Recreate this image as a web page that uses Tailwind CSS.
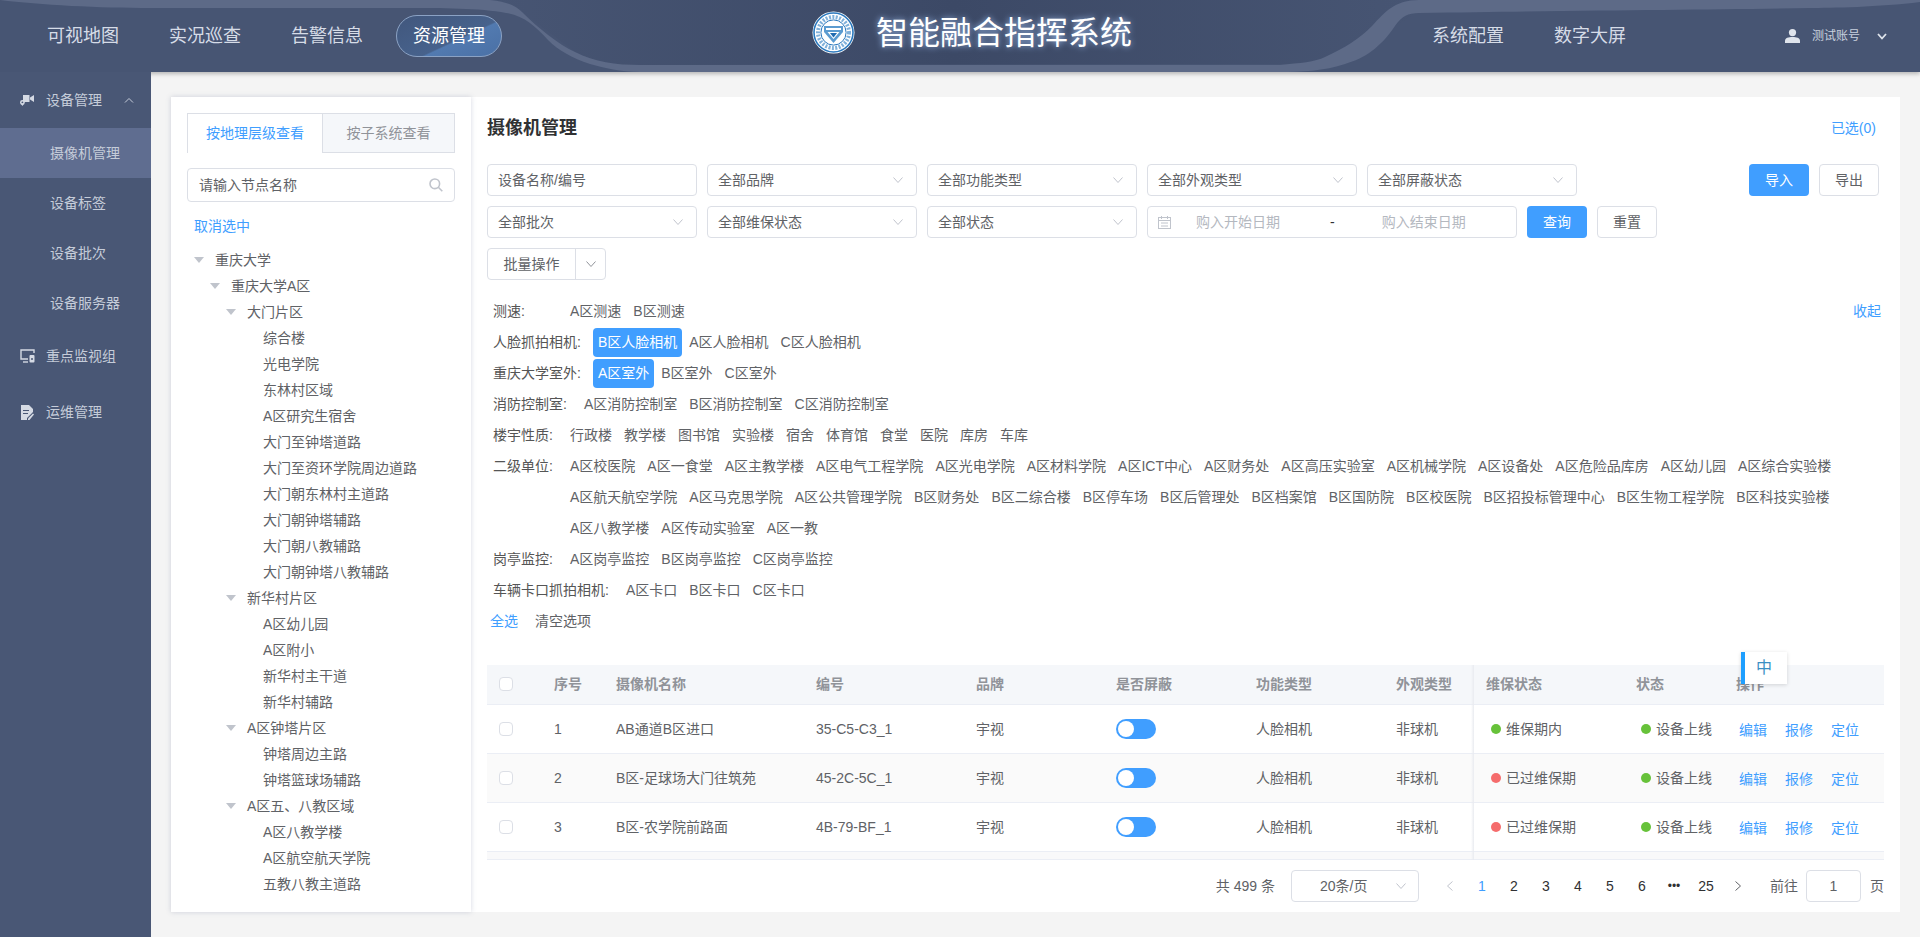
<!DOCTYPE html>
<html lang="zh-CN">
<head>
    <meta charset="UTF-8">
    <title>智能融合指挥系统</title>
    <script src="https://cdn.jsdelivr.net/npm/@tailwindcss/browser@4"></script>
</head>
<body class="h-[937px] overflow-hidden flex flex-col bg-[#f4f4f4] text-sm text-[#606266] [font-family:'Liberation_Sans','Noto_Sans_CJK_SC',sans-serif]">

    <!-- header -->
    <header class="relative z-10 h-[72px] shrink-0 flex items-center bg-[#475573] shadow-[0_2px_4px_rgba(0,0,0,.25)]">
        <svg class="absolute inset-0" width="1920" height="72" viewBox="0 0 1920 72">
            <defs>
                <linearGradient id="mid" x1="0" x2="1" y1="0" y2="0">
                    <stop offset="0" stop-color="#475573"/>
                    <stop offset="0.5" stop-color="#3c4966"/>
                    <stop offset="1" stop-color="#475573"/>
                </linearGradient>
            </defs>
            <path fill="url(#mid)" d="M490 0 H1419 V13 L1395 26 C1380 48 1365 58 1345 64 L1280 64 L640 65 C615 65 595 62 575 52 L522 12 Z"/>
            <path fill="#5d6a87" d="M0 0 H490 C508 2 516 6 522 12 C538 28 558 44 575 52 C595 62 615 65 640 65 H1280 C1300 63 1315 62 1325 57 C1345 48 1360 38 1372 26 C1385 12 1395 0 1419 0 H1920 V2 C1880 7 1830 8 1810 8 C1700 10 1600 10 1419 13 C1408 13 1402 16 1395 26 C1380 48 1365 58 1345 64 C1325 71 1300 72 1280 72 H640 C620 72 605 68 590 64 C572 58 558 50 548 40 C535 26 524 16 506 13 C480 8 440 8 408 8 H151 C100 8 40 5 0 0 Z"/>
        </svg>

        <nav class="relative flex items-center gap-[50px] pl-[47px] text-lg text-[#d6dce7]">
            <a>可视地图</a>
            <a>实况巡查</a>
            <a>告警信息</a>
            <a class="-ml-[17px] h-[42px] px-4 flex items-center rounded-[21px] border border-[#8ba2c4] text-white bg-[linear-gradient(155deg,#41577d_0%,#47628c_58%,#527ab0_60%,#4a70a5_100%)]">资源管理</a>
        </nav>

        <div class="absolute left-[812px] top-[11px] flex items-center">
            <svg width="43" height="43" viewBox="0 0 43 43">
                <circle cx="21.5" cy="21.5" r="21" fill="#fff"/>
                <circle cx="21.5" cy="21.5" r="19.5" fill="none" stroke="#2a78bd" stroke-width="1.6"/>
                <circle cx="21.5" cy="21.5" r="15.5" fill="none" stroke="#7fb0da" stroke-width="4" stroke-dasharray="2 1.4"/>
                <circle cx="21.5" cy="21.5" r="12.6" fill="#fff" stroke="#2a78bd" stroke-width="1"/>
                <path fill="#5b9bd0" d="M12 15 H31 V21 L21.5 32 L12 21 Z"/>
                <path fill="#fff" d="M14 17 H29 V19 H14 Z M15.5 21 H27.5 L21.5 28 Z"/>
                <path fill="#1f6bb0" d="M18 22 H25 L21.5 26.5 Z"/>
            </svg>
            <h1 class="ml-[21px] text-[32px] leading-[42px] text-white [text-shadow:0_0_6px_rgba(170,205,255,.85)]">智能融合指挥系统</h1>
        </div>

        <nav class="relative ml-auto flex items-center gap-[50px] text-lg text-[#d6dce7]">
            <a>系统配置</a>
            <a>数字大屏</a>
        </nav>
        <div class="relative ml-[159px] mr-[33px] flex items-center text-xs text-[#c9d1df]">
            <svg width="15" height="14" viewBox="0 0 15 14" fill="#dfe4ec"><circle cx="7.5" cy="3.6" r="3.6"/><path d="M0 14 V11.5 C0 9 3.5 8 7.5 8 S15 9 15 11.5 V14 Z"/></svg>
            <span class="ml-3 w-12">测试账号</span>
            <svg class="ml-[17px]" width="10" height="7" viewBox="0 0 10 7" fill="none" stroke="#dfe4ec" stroke-width="1.8"><path d="M1 1 L5 5.5 L9 1"/></svg>
        </div>
    </header>

    <div class="flex flex-1 min-h-0">
        <!-- sidebar -->
        <aside class="relative z-20 w-[151px] shrink-0 bg-[#495775] text-[#c5ccd9]">
            <div class="h-14 flex items-center">
                <svg class="ml-5" width="14" height="12" viewBox="0 0 14 12" fill="#d5dae4"><path d="M3 1 H9.5 V8 H3 Z M10 3.5 L14 1 V8 L10 5.5 Z"/><circle cx="2.4" cy="8.4" r="2.4"/><circle cx="2.4" cy="8.4" r="0.9" fill="#495775"/><path d="M0.6 9.6 L2.4 12 L4.2 9.6 Z"/></svg>
                <span class="ml-3">设备管理</span>
                <svg class="ml-[22px]" width="10" height="6" viewBox="0 0 10 6" fill="none" stroke="#c5ccd9"><path d="M1 5.5 L5 1.5 L9 5.5"/></svg>
            </div>
            <a class="h-[50px] flex items-center pl-[50px] bg-[#5f6d90]">摄像机管理</a>
            <a class="h-[50px] flex items-center pl-[50px]">设备标签</a>
            <a class="h-[50px] flex items-center pl-[50px]">设备批次</a>
            <a class="h-[50px] flex items-center pl-[50px]">设备服务器</a>
            <div class="h-14 flex items-center">
                <svg class="ml-5" width="15" height="14" viewBox="0 0 15 14" fill="none" stroke="#d5dae4" stroke-width="1.4"><path d="M8 10 H1 V1 H14 V4"/><path d="M3 13 H8"/><rect x="9.5" y="6" width="5" height="7.5" rx="1" fill="#d5dae4" stroke="none"/><circle cx="12" cy="10" r="1" fill="#495775" stroke="none"/></svg>
                <span class="ml-[11px]">重点监视组</span>
            </div>
            <div class="h-14 flex items-center">
                <svg class="ml-[21px]" width="13" height="15" viewBox="0 0 13 15" fill="#d5dae4"><path d="M0 0 H8 L12 4 V7 L6 13 V15 H0 Z"/><path d="M7 15 V13.5 L12 8.5 L13 9.5 L8.5 15 Z"/><path d="M2 5 H8 V6 H2 Z M2 8 H7 V9 H2 Z" fill="#495775"/></svg>
                <span class="ml-3">运维管理</span>
            </div>
        </aside>

        <main class="flex-1 min-w-0 flex pt-[25px] pb-[25px] pl-5 pr-5">
            <!-- left tree panel -->
            <section class="relative z-[1] w-[300px] shrink-0 bg-white shadow-[0_0_5px_rgba(90,100,140,.25)] px-4 pt-4">
                <div class="flex h-10 border border-[#dcdfe6] border-b-0 text-center leading-[38px]">
                    <div class="w-[134px] text-[#409eff]">按地理层级查看</div>
                    <div class="flex-1 bg-[#f5f7fa] border-l border-b border-[#dcdfe6] text-[#909399]">按子系统查看</div>
                </div>
                <div class="mt-[15px] h-[34px] flex items-center justify-between px-[11px] border border-[#dcdfe6] rounded">
                    <span>请输入节点名称</span>
                    <svg width="14" height="14" viewBox="0 0 14 14" fill="none" stroke="#c0c4cc" stroke-width="1.6"><circle cx="5.8" cy="5.8" r="4.8"/><path d="M9.3 9.3 L13.3 13.3"/></svg>
                </div>
                <div class="mt-[14px] ml-[7px] leading-5 text-[#409eff]">取消选中</div>
                <div class="mt-[11px] ml-[7px]">
                    <div class="h-[26px] flex items-center"><svg class="w-[21px] shrink-0" height="6" viewBox="0 0 21 6" fill="#c0c4cc"><path d="M0 0 H10 L5 6 Z"/></svg>重庆大学</div>
                    <div class="h-[26px] flex items-center pl-4"><svg class="w-[21px] shrink-0" height="6" viewBox="0 0 21 6" fill="#c0c4cc"><path d="M0 0 H10 L5 6 Z"/></svg>重庆大学A区</div>
                    <div class="h-[26px] flex items-center pl-8"><svg class="w-[21px] shrink-0" height="6" viewBox="0 0 21 6" fill="#c0c4cc"><path d="M0 0 H10 L5 6 Z"/></svg>大门片区</div>
                    <div class="h-[26px] flex items-center pl-[69px]">综合楼</div>
                    <div class="h-[26px] flex items-center pl-[69px]">光电学院</div>
                    <div class="h-[26px] flex items-center pl-[69px]">东林村区域</div>
                    <div class="h-[26px] flex items-center pl-[69px]">A区研究生宿舍</div>
                    <div class="h-[26px] flex items-center pl-[69px]">大门至钟塔道路</div>
                    <div class="h-[26px] flex items-center pl-[69px]">大门至资环学院周边道路</div>
                    <div class="h-[26px] flex items-center pl-[69px]">大门朝东林村主道路</div>
                    <div class="h-[26px] flex items-center pl-[69px]">大门朝钟塔辅路</div>
                    <div class="h-[26px] flex items-center pl-[69px]">大门朝八教辅路</div>
                    <div class="h-[26px] flex items-center pl-[69px]">大门朝钟塔八教辅路</div>
                    <div class="h-[26px] flex items-center pl-8"><svg class="w-[21px] shrink-0" height="6" viewBox="0 0 21 6" fill="#c0c4cc"><path d="M0 0 H10 L5 6 Z"/></svg>新华村片区</div>
                    <div class="h-[26px] flex items-center pl-[69px]">A区幼儿园</div>
                    <div class="h-[26px] flex items-center pl-[69px]">A区附小</div>
                    <div class="h-[26px] flex items-center pl-[69px]">新华村主干道</div>
                    <div class="h-[26px] flex items-center pl-[69px]">新华村辅路</div>
                    <div class="h-[26px] flex items-center pl-8"><svg class="w-[21px] shrink-0" height="6" viewBox="0 0 21 6" fill="#c0c4cc"><path d="M0 0 H10 L5 6 Z"/></svg>A区钟塔片区</div>
                    <div class="h-[26px] flex items-center pl-[69px]">钟塔周边主路</div>
                    <div class="h-[26px] flex items-center pl-[69px]">钟塔篮球场辅路</div>
                    <div class="h-[26px] flex items-center pl-8"><svg class="w-[21px] shrink-0" height="6" viewBox="0 0 21 6" fill="#c0c4cc"><path d="M0 0 H10 L5 6 Z"/></svg>A区五、八教区域</div>
                    <div class="h-[26px] flex items-center pl-[69px]">A区八教学楼</div>
                    <div class="h-[26px] flex items-center pl-[69px]">A区航空航天学院</div>
                    <div class="h-[26px] flex items-center pl-[69px]">五教八教主道路</div>
                </div>
            </section>

            <!-- right content panel -->
            <section class="flex-1 min-w-0 bg-white px-4 pt-[15px] relative">
                <div class="h-8 flex items-center justify-between">
                    <h2 class="text-lg font-bold text-[#303133]">摄像机管理</h2>
                    <span class="mr-2 text-[#409eff]">已选(0)</span>
                </div>

                <!-- filters -->
                <div class="mt-5 flex gap-[10px]">
                    <div class="w-[210px] h-8 flex items-center px-[10px] border border-[#dcdfe6] rounded">设备名称/编号</div>
                    <div class="w-[210px] h-8 flex items-center justify-between pl-[10px] pr-[13px] border border-[#dcdfe6] rounded">全部品牌<svg width="10" height="6" viewBox="0 0 10 6" fill="none" stroke="#c0c4cc"><path d="M.5 .5 L5 5.5 L9.5 .5"/></svg></div>
                    <div class="w-[210px] h-8 flex items-center justify-between pl-[10px] pr-[13px] border border-[#dcdfe6] rounded">全部功能类型<svg width="10" height="6" viewBox="0 0 10 6" fill="none" stroke="#c0c4cc"><path d="M.5 .5 L5 5.5 L9.5 .5"/></svg></div>
                    <div class="w-[210px] h-8 flex items-center justify-between pl-[10px] pr-[13px] border border-[#dcdfe6] rounded">全部外观类型<svg width="10" height="6" viewBox="0 0 10 6" fill="none" stroke="#c0c4cc"><path d="M.5 .5 L5 5.5 L9.5 .5"/></svg></div>
                    <div class="w-[210px] h-8 flex items-center justify-between pl-[10px] pr-[13px] border border-[#dcdfe6] rounded">全部屏蔽状态<svg width="10" height="6" viewBox="0 0 10 6" fill="none" stroke="#c0c4cc"><path d="M.5 .5 L5 5.5 L9.5 .5"/></svg></div>
                    <button class="ml-auto w-[60px] h-8 rounded bg-[#409eff] text-white">导入</button>
                    <button class="mr-[5px] w-[60px] h-8 rounded border border-[#dcdfe6]">导出</button>
                </div>
                <div class="mt-[10px] flex gap-[10px]">
                    <div class="w-[210px] h-8 flex items-center justify-between pl-[10px] pr-[13px] border border-[#dcdfe6] rounded">全部批次<svg width="10" height="6" viewBox="0 0 10 6" fill="none" stroke="#c0c4cc"><path d="M.5 .5 L5 5.5 L9.5 .5"/></svg></div>
                    <div class="w-[210px] h-8 flex items-center justify-between pl-[10px] pr-[13px] border border-[#dcdfe6] rounded">全部维保状态<svg width="10" height="6" viewBox="0 0 10 6" fill="none" stroke="#c0c4cc"><path d="M.5 .5 L5 5.5 L9.5 .5"/></svg></div>
                    <div class="w-[210px] h-8 flex items-center justify-between pl-[10px] pr-[13px] border border-[#dcdfe6] rounded">全部状态<svg width="10" height="6" viewBox="0 0 10 6" fill="none" stroke="#c0c4cc"><path d="M.5 .5 L5 5.5 L9.5 .5"/></svg></div>
                    <div class="w-[370px] h-8 flex items-center pl-[10px] border border-[#dcdfe6] rounded text-[#b4b8bf]">
                        <svg class="shrink-0" width="13" height="13" viewBox="0 0 13 13" fill="none" stroke="#c0c4cc"><rect x=".5" y="1.5" width="12" height="11"/><path d="M.5 4.5 H12.5 M3.5 0 V3 M9.5 0 V3 M3 7 H10 M3 10 H10"/></svg>
                        <span class="ml-[25px] w-[84px]">购入开始日期</span>
                        <span class="ml-[50px] text-[#303133]">-</span>
                        <span class="ml-[47px] w-[84px]">购入结束日期</span>
                    </div>
                    <button class="w-[60px] h-8 rounded bg-[#409eff] text-white">查询</button>
                    <button class="w-[60px] h-8 rounded border border-[#dcdfe6]">重置</button>
                </div>
                <div class="mt-[10px] w-[119px] h-8 flex items-center border border-[#dcdfe6] rounded">
                    <span class="w-[87px] text-center">批量操作</span>
                    <span class="flex-1 h-full flex items-center justify-center border-l border-[#dcdfe6]"><svg width="10" height="6" viewBox="0 0 10 6" fill="none" stroke="#909399"><path d="M.5 .5 L5 5.5 L9.5 .5"/></svg></span>
                </div>

                <!-- tag groups -->
                <div class="mt-[17px] ml-[6px] leading-[29px]">
                    <div class="flex">
                        <span class="min-w-[72px] pr-3 shrink-0 text-[#555]">测速:</span>
                        <div class="flex flex-wrap flex-1">
                            <a class="px-[5px] mr-[2px] mb-[2px]">A区测速</a><a class="px-[5px] mr-[2px] mb-[2px]">B区测速</a>
                            <a class="ml-auto mr-[3px] text-[#409eff]">收起</a>
                        </div>
                    </div>
                    <div class="flex">
                        <span class="min-w-[72px] pr-3 shrink-0 text-[#555]">人脸抓拍相机:</span>
                        <div class="flex flex-wrap flex-1">
                            <a class="px-[5px] mr-[2px] mb-[2px] rounded bg-[#409eff] text-white">B区人脸相机</a><a class="px-[5px] mr-[2px] mb-[2px]">A区人脸相机</a><a class="px-[5px] mr-[2px] mb-[2px]">C区人脸相机</a>
                        </div>
                    </div>
                    <div class="flex">
                        <span class="min-w-[72px] pr-3 shrink-0 text-[#555]">重庆大学室外:</span>
                        <div class="flex flex-wrap flex-1">
                            <a class="px-[5px] mr-[2px] mb-[2px] rounded bg-[#409eff] text-white">A区室外</a><a class="px-[5px] mr-[2px] mb-[2px]">B区室外</a><a class="px-[5px] mr-[2px] mb-[2px]">C区室外</a>
                        </div>
                    </div>
                    <div class="flex">
                        <span class="min-w-[72px] pr-3 shrink-0 text-[#555]">消防控制室:</span>
                        <div class="flex flex-wrap flex-1">
                            <a class="px-[5px] mr-[2px] mb-[2px]">A区消防控制室</a><a class="px-[5px] mr-[2px] mb-[2px]">B区消防控制室</a><a class="px-[5px] mr-[2px] mb-[2px]">C区消防控制室</a>
                        </div>
                    </div>
                    <div class="flex">
                        <span class="min-w-[72px] pr-3 shrink-0 text-[#555]">楼宇性质:</span>
                        <div class="flex flex-wrap flex-1">
                            <a class="px-[5px] mr-[2px] mb-[2px]">行政楼</a><a class="px-[5px] mr-[2px] mb-[2px]">教学楼</a><a class="px-[5px] mr-[2px] mb-[2px]">图书馆</a><a class="px-[5px] mr-[2px] mb-[2px]">实验楼</a><a class="px-[5px] mr-[2px] mb-[2px]">宿舍</a><a class="px-[5px] mr-[2px] mb-[2px]">体育馆</a><a class="px-[5px] mr-[2px] mb-[2px]">食堂</a><a class="px-[5px] mr-[2px] mb-[2px]">医院</a><a class="px-[5px] mr-[2px] mb-[2px]">库房</a><a class="px-[5px] mr-[2px] mb-[2px]">车库</a>
                        </div>
                    </div>
                    <div class="flex">
                        <span class="min-w-[72px] pr-3 shrink-0 text-[#555]">二级单位:</span>
                        <div class="flex flex-wrap flex-1">
                            <a class="px-[5px] mr-[2px] mb-[2px]">A区校医院</a><a class="px-[5px] mr-[2px] mb-[2px]">A区一食堂</a><a class="px-[5px] mr-[2px] mb-[2px]">A区主教学楼</a><a class="px-[5px] mr-[2px] mb-[2px]">A区电气工程学院</a><a class="px-[5px] mr-[2px] mb-[2px]">A区光电学院</a><a class="px-[5px] mr-[2px] mb-[2px]">A区材料学院</a><a class="px-[5px] mr-[2px] mb-[2px]">A区ICT中心</a><a class="px-[5px] mr-[2px] mb-[2px]">A区财务处</a><a class="px-[5px] mr-[2px] mb-[2px]">A区高压实验室</a><a class="px-[5px] mr-[2px] mb-[2px]">A区机械学院</a><a class="px-[5px] mr-[2px] mb-[2px]">A区设备处</a><a class="px-[5px] mr-[2px] mb-[2px]">A区危险品库房</a><a class="px-[5px] mr-[2px] mb-[2px]">A区幼儿园</a><a class="px-[5px] mr-[2px] mb-[2px]">A区综合实验楼</a><a class="px-[5px] mr-[2px] mb-[2px]">A区航天航空学院</a><a class="px-[5px] mr-[2px] mb-[2px]">A区马克思学院</a><a class="px-[5px] mr-[2px] mb-[2px]">A区公共管理学院</a><a class="px-[5px] mr-[2px] mb-[2px]">B区财务处</a><a class="px-[5px] mr-[2px] mb-[2px]">B区二综合楼</a><a class="px-[5px] mr-[2px] mb-[2px]">B区停车场</a><a class="px-[5px] mr-[2px] mb-[2px]">B区后管理处</a><a class="px-[5px] mr-[2px] mb-[2px]">B区档案馆</a><a class="px-[5px] mr-[2px] mb-[2px]">B区国防院</a><a class="px-[5px] mr-[2px] mb-[2px]">B区校医院</a><a class="px-[5px] mr-[2px] mb-[2px]">B区招投标管理中心</a><a class="px-[5px] mr-[2px] mb-[2px]">B区生物工程学院</a><a class="px-[5px] mr-[2px] mb-[2px]">B区科技实验楼</a><a class="px-[5px] mr-[2px] mb-[2px]">A区八教学楼</a><a class="px-[5px] mr-[2px] mb-[2px]">A区传动实验室</a><a class="px-[5px] mr-[2px] mb-[2px]">A区一教</a>
                        </div>
                    </div>
                    <div class="flex">
                        <span class="min-w-[72px] pr-3 shrink-0 text-[#555]">岗亭监控:</span>
                        <div class="flex flex-wrap flex-1">
                            <a class="px-[5px] mr-[2px] mb-[2px]">A区岗亭监控</a><a class="px-[5px] mr-[2px] mb-[2px]">B区岗亭监控</a><a class="px-[5px] mr-[2px] mb-[2px]">C区岗亭监控</a>
                        </div>
                    </div>
                    <div class="flex">
                        <span class="min-w-[72px] pr-3 shrink-0 text-[#555]">车辆卡口抓拍相机:</span>
                        <div class="flex flex-wrap flex-1">
                            <a class="px-[5px] mr-[2px] mb-[2px]">A区卡口</a><a class="px-[5px] mr-[2px] mb-[2px]">B区卡口</a><a class="px-[5px] mr-[2px] mb-[2px]">C区卡口</a>
                        </div>
                    </div>
                    <div class="flex gap-[17px] -ml-[3px]">
                        <a class="text-[#409eff]">全选</a>
                        <a>清空选项</a>
                    </div>
                </div>

                <!-- table -->
                <div class="relative mt-[29px]">
                    <table class="w-full table-fixed border-collapse">
                        <colgroup>
                            <col class="w-[57px]"><col class="w-[62px]"><col class="w-[200px]"><col class="w-[160px]"><col class="w-[140px]"><col class="w-[140px]"><col class="w-[140px]"><col class="w-[88px]"><col class="w-[152px]"><col class="w-[100px]"><col>
                        </colgroup>
                        <thead>
                            <tr class="h-[39px] bg-[#f5f7fa] border-b border-[#ebeef5] text-left text-[#909399]">
                                <th class="pl-3"><span class="block w-[14px] h-[14px] bg-white border border-[#dcdfe6] rounded-sm"></span></th>
                                <th class="pl-[10px]">序号</th>
                                <th class="pl-[10px]">摄像机名称</th>
                                <th class="pl-[10px]">编号</th>
                                <th class="pl-[10px]">品牌</th>
                                <th class="pl-[10px]">是否屏蔽</th>
                                <th class="pl-[10px]">功能类型</th>
                                <th class="pl-[10px]">外观类型</th>
                                <th class="pl-3">维保状态</th>
                                <th class="pl-[10px]">状态</th>
                                <th class="pl-[10px]">操作</th>
                            </tr>
                        </thead>
                        <tbody>
                            <tr class="h-[49px] border-b border-[#ebeef5]">
                                <td class="pl-3"><span class="block w-[14px] h-[14px] border border-[#dcdfe6] rounded-sm"></span></td>
                                <td class="pl-[10px]">1</td>
                                <td class="pl-[10px]">AB通道B区进口</td>
                                <td class="pl-[10px]">35-C5-C3_1</td>
                                <td class="pl-[10px]">宇视</td>
                                <td class="pl-[10px]"><span class="block w-10 h-5 p-[2px] rounded-full bg-[#409eff]"><span class="block w-4 h-4 rounded-full bg-white"></span></span></td>
                                <td class="pl-[10px]">人脸相机</td>
                                <td class="pl-[10px]">非球机</td>
                                <td class="pl-[17px]"><span class="flex items-center gap-[5px]"><i class="w-[10px] h-[10px] rounded-full bg-[#67c23a]"></i>维保期内</span></td>
                                <td class="pl-[15px]"><span class="flex items-center gap-[5px]"><i class="w-[10px] h-[10px] rounded-full bg-[#67c23a]"></i>设备上线</span></td>
                                <td class="pl-[13px] pt-[2px] text-[#409eff]"><span class="flex gap-[18px]"><a>编辑</a><a>报修</a><a>定位</a></span></td>
                            </tr>
                            <tr class="h-[49px] border-b border-[#ebeef5] bg-[#fafafa]">
                                <td class="pl-3"><span class="block w-[14px] h-[14px] bg-white border border-[#dcdfe6] rounded-sm"></span></td>
                                <td class="pl-[10px]">2</td>
                                <td class="pl-[10px]">B区-足球场大门往筑苑</td>
                                <td class="pl-[10px]">45-2C-5C_1</td>
                                <td class="pl-[10px]">宇视</td>
                                <td class="pl-[10px]"><span class="block w-10 h-5 p-[2px] rounded-full bg-[#409eff]"><span class="block w-4 h-4 rounded-full bg-white"></span></span></td>
                                <td class="pl-[10px]">人脸相机</td>
                                <td class="pl-[10px]">非球机</td>
                                <td class="pl-[17px]"><span class="flex items-center gap-[5px]"><i class="w-[10px] h-[10px] rounded-full bg-[#f56c6c]"></i>已过维保期</span></td>
                                <td class="pl-[15px]"><span class="flex items-center gap-[5px]"><i class="w-[10px] h-[10px] rounded-full bg-[#67c23a]"></i>设备上线</span></td>
                                <td class="pl-[13px] pt-[2px] text-[#409eff]"><span class="flex gap-[18px]"><a>编辑</a><a>报修</a><a>定位</a></span></td>
                            </tr>
                            <tr class="h-[49px] border-b border-[#ebeef5]">
                                <td class="pl-3"><span class="block w-[14px] h-[14px] border border-[#dcdfe6] rounded-sm"></span></td>
                                <td class="pl-[10px]">3</td>
                                <td class="pl-[10px]">B区-农学院前路面</td>
                                <td class="pl-[10px]">4B-79-BF_1</td>
                                <td class="pl-[10px]">宇视</td>
                                <td class="pl-[10px]"><span class="block w-10 h-5 p-[2px] rounded-full bg-[#409eff]"><span class="block w-4 h-4 rounded-full bg-white"></span></span></td>
                                <td class="pl-[10px]">人脸相机</td>
                                <td class="pl-[10px]">非球机</td>
                                <td class="pl-[17px]"><span class="flex items-center gap-[5px]"><i class="w-[10px] h-[10px] rounded-full bg-[#f56c6c]"></i>已过维保期</span></td>
                                <td class="pl-[15px]"><span class="flex items-center gap-[5px]"><i class="w-[10px] h-[10px] rounded-full bg-[#67c23a]"></i>设备上线</span></td>
                                <td class="pl-[13px] pt-[2px] text-[#409eff]"><span class="flex gap-[18px]"><a>编辑</a><a>报修</a><a>定位</a></span></td>
                            </tr>
                        </tbody>
                    </table>
                    <div class="h-2 bg-[#f9f9fa] border-b border-[#ebeef5]"></div>
                    <!-- fixed column edge -->
                    <div class="absolute left-[984px] top-0 bottom-0 w-[3px] bg-gradient-to-r from-transparent to-[#e9ebf0]"></div>
                    <!-- floating input-method tab -->
                    <div class="absolute left-[1254px] -top-[13px] w-[46px] h-8 flex items-center pl-[11px] bg-white border-l-4 border-[#1e9fff] shadow-[0_1px_4px_rgba(0,0,0,.15)] text-base text-[#3b8fc4]">中</div>
                </div>

                <!-- pagination -->
                <div class="mt-[10px] h-8 flex items-center justify-end">
                    <span>共 499 条</span>
                    <div class="ml-4 w-[128px] h-8 flex items-center justify-between pl-7 pr-3 border border-[#dcdfe6] rounded">20条/页<svg width="10" height="6" viewBox="0 0 10 6" fill="none" stroke="#c0c4cc"><path d="M.5 .5 L5 5.5 L9.5 .5"/></svg></div>
                    <div class="ml-[15px] flex text-center text-[#303133]">
                        <span class="w-8 flex items-center justify-center"><svg width="6" height="10" viewBox="0 0 6 10" fill="none" stroke="#c0c4cc"><path d="M5.5 .5 L.5 5 L5.5 9.5"/></svg></span>
                        <span class="w-8 text-[#409eff]">1</span>
                        <span class="w-8">2</span>
                        <span class="w-8">3</span>
                        <span class="w-8">4</span>
                        <span class="w-8">5</span>
                        <span class="w-8">6</span>
                        <span class="w-8 text-xs leading-5">•••</span>
                        <span class="w-8">25</span>
                        <span class="w-8 flex items-center justify-center"><svg width="6" height="10" viewBox="0 0 6 10" fill="none" stroke="#606266"><path d="M.5 .5 L5.5 5 L.5 9.5"/></svg></span>
                    </div>
                    <span class="ml-4">前往</span>
                    <div class="ml-2 w-[55px] h-8 flex items-center justify-center border border-[#dcdfe6] rounded">1</div>
                    <span class="ml-[9px]">页</span>
                </div>
            </section>
        </main>
    </div>
</body>
</html>
